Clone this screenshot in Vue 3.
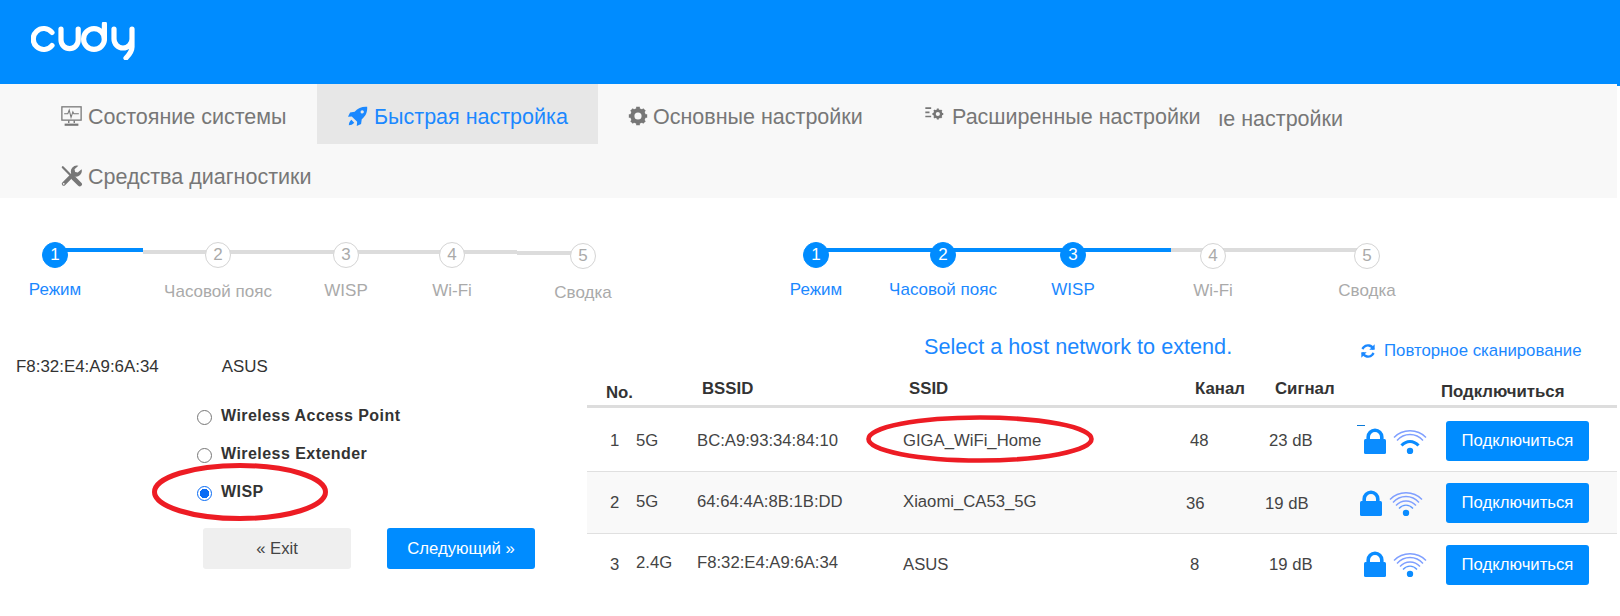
<script setup>
const tabsRow = [
  { label: 'Состояние системы', icon: 'monitor', cls: 't1' },
  { label: 'Быстрая настройка', icon: 'rocket', cls: 't2 active' },
  { label: 'Основные настройки', icon: 'gear', cls: 't3' },
  { label: 'Расширенные настройки', icon: 'adv', cls: 't4' }
]
const names = ['Режим', 'Часовой пояс', 'WISP', 'Wi-Fi', 'Сводка']
const leftSteps = [
  { g: 0, dy: 0, ly: 0, on: true }, { g: 163, dy: 0, ly: 2 }, { g: 128, dy: 0, ly: 1 }, { g: 106, dy: 0, ly: 1 }, { g: 131, dy: 1, ly: 2 }
]
const rightSteps = [
  { g: 0, dy: 0, ly: 0, on: true }, { g: 127, dy: 0, ly: 0, on: true }, { g: 130, dy: 0, ly: 0, on: true }, { g: 140, dy: 1, ly: 0 }, { g: 154, dy: 1, ly: 0 }
]
const stepOf = (list) => list.map((s, i) => ({ ...s, n: i + 1, name: names[i] }))
const left = stepOf(leftSteps)
const right = stepOf(rightSteps)
const rows = [
  { n: 1, band: '5G', mac: 'BC:A9:93:34:84:10', ssid: 'GIGA_WiFi_Home', ch: '48', sig: '23 dB', dx: 0, iy: -1, strong: true, y: [0, 0, 0, 0, 0, 0], cls: 'first' },
  { n: 2, band: '5G', mac: '64:64:4A:8B:1B:DD', ssid: 'Xiaomi_CA53_5G', ch: '36', sig: '19 dB', dx: -4, iy: -1, strong: false, y: [-1, -3, -3, -3, 2, 2], cls: 'alt' },
  { n: 3, band: '2.4G', mac: 'F8:32:E4:A9:6A:34', ssid: 'ASUS', ch: '8', sig: '19 dB', dx: 0, iy: -2, strong: false, y: [0, -4, -4, 0, 0, 0], cls: 'last' }
]
</script>

<template>
  <div class="page">
    <header class="top">
      <svg class="logo" viewBox="0 0 104 38" fill="none" stroke="#fff" stroke-width="5.2" stroke-linecap="round" stroke-linejoin="round">
        <path d="M21 10.5 A10.5 10.5 0 1 0 21 23.5" />
        <path d="M30 7 V18 A8.6 8.6 0 0 0 47.2 18 V7" />
        <circle cx="63" cy="17" r="10.4" />
        <path d="M73.4 2 V17" />
        <path d="M83 7 V17 A9 9 0 0 0 101 17 V7 V25 C101 30 98 33 95 36" />
      </svg>
    </header>
    <span class="stripe"></span>

    <nav class="nav">
      <a v-for="t in tabsRow" :key="t.label" class="tab" :class="t.cls">
        <svg v-if="t.icon === 'monitor'" class="ic" viewBox="0 0 24 24" fill="none" stroke="currentColor">
          <rect x="1.5" y="2" width="21" height="14.5" stroke-width="1.4" />
          <path d="M4 9.5h4l1.5-4 2 8 2-6 1 2h5.5" stroke-width="1.1" />
          <path d="M9 17v2.5M15 17v2.5" stroke-width="1.5" />
          <path d="M4.5 21.5h15" stroke-width="2.4" />
        </svg>
        <svg v-else-if="t.icon === 'rocket'" class="ic" viewBox="0 0 24 24" fill="currentColor">
          <path d="M23 1c.5 6-1.500 11-6.500 15l-.8 5.500L10.500 24l.5-5-6.500-6.500-4.500.5 2.500-5.200L8 7C12 2.500 17 .500 23 1zM17 5a2 2 0 1 0 .1 4 2 2 0 0 0-.1-4zM4 16.500l3.500 3.500C6 22 3 23 1 23c0-2 1-5 3-6.500z" />
        </svg>
        <svg v-else-if="t.icon === 'gear'" class="ic" viewBox="0 0 24 24" fill="none" stroke="currentColor">
          <circle cx="12" cy="12" r="6.800" stroke-width="5" />
          <path d="M12 1v22M1 12h22M4.200 4.200l15.600 15.600M19.800 4.200 4.200 19.800" stroke-width="4.400" stroke-dasharray="4 14" />
        </svg>
        <svg v-else class="ic adv" viewBox="0 0 24 24" fill="none" stroke="currentColor">
          <path d="M1 5h7M1 10h5M1 15h7" stroke-width="2" />
          <circle cx="16" cy="12" r="4" stroke-width="3" />
          <path d="M16 5.500v13M9.500 12h13M11.400 7.400l9.200 9.200M20.600 7.400l-9.200 9.200" stroke-width="2.400" stroke-dasharray="2.400 8.200" />
        </svg>
        <span>{{ t.label }}</span>
      </a>
      <span class="ghost">ые настройки</span>
      <a class="tab t5">
        <svg class="ic" viewBox="0 0 24 24" fill="none" stroke="currentColor" stroke-linecap="round">
          <path d="M2.500 2.500 13 13" stroke-width="2.400" />
          <path d="M14 14l7 7" stroke-width="4.800" />
          <path d="M3.500 20.500 14 10" stroke-width="4.200" />
          <path d="M23 4.500 18.800 8.200 16 7.500 15.300 4.700 19.500 .8A6.500 6.500 0 0 0 11.800 9.500L14.800 12.500A6.500 6.500 0 0 0 23 4.500z" fill="currentColor" stroke="none" />
          <circle cx="3.500" cy="20.500" r="1" fill="#f8f8f8" stroke="none" />
        </svg>
        <span>Средства диагностики</span>
      </a>
    </nav>

    <main class="main">
      <section class="left">
        <div class="stepper s-left">
          <span class="line grey"></span><span class="line grey2"></span><span class="line blue"></span>
          <div v-for="s in left" :key="s.n" class="step" :class="{ on: s.on }" :style="{ marginLeft: s.g + 'px', marginTop: s.dy + 'px' }">
            <span class="dot">{{ s.n }}</span>
            <span class="lbl" :style="{ marginTop: 12 + s.ly + 'px' }">{{ s.name }}</span>
          </div>
        </div>
        <div class="host"><span>F8:32:E4:A9:6A:34</span><span>ASUS</span></div>
        <div class="radios">
          <label class="radio"><i></i>Wireless Access Point</label>
          <label class="radio"><i></i>Wireless Extender</label>
          <label class="radio sel"><i></i>WISP</label>
        </div>
        <div class="actions">
          <button class="btn ghostbtn">« Exit</button>
          <button class="btn">Следующий »</button>
        </div>
      </section>

      <section class="right">
        <div class="stepper s-right">
          <span class="line grey"></span><span class="line blue"></span>
          <div v-for="s in right" :key="s.n" class="step" :class="{ on: s.on }" :style="{ marginLeft: s.g + 'px', marginTop: s.dy + 'px' }">
            <span class="dot">{{ s.n }}</span>
            <span class="lbl" :style="{ marginTop: 12 + s.ly + 'px' }">{{ s.name }}</span>
          </div>
        </div>
        <div class="titlebar">
          <h2>Select a host network to extend.</h2>
          <a class="rescan">
            <svg viewBox="0 0 24 24" fill="none" stroke="currentColor" stroke-width="3.600">
              <path d="M20 9.500A8.500 8.500 0 0 0 5.500 6.500L3.500 9" />
              <path d="M4 14.500A8.500 8.500 0 0 0 18.500 17.500l2-2.500" />
              <path d="M22 2v8h-8zM2 22v-8h8z" fill="currentColor" stroke="none" />
            </svg>
            Повторное сканирование
          </a>
        </div>

        <div class="thead">
          <b class="no">No.</b><b>BSSID</b><b>SSID</b><b>Канал</b><b>Сигнал</b><b class="conn">Подключиться</b>
        </div>
        <div v-for="r in rows" :key="r.n" class="row" :class="r.cls">
          <span :style="{ marginTop: r.y[0] + 'px' }">{{ r.n }}</span>
          <span :style="{ marginTop: r.y[1] + 'px' }">{{ r.band }}</span>
          <span :style="{ marginTop: r.y[2] + 'px' }">{{ r.mac }}</span>
          <span :style="{ marginTop: r.y[3] + 'px' }">{{ r.ssid }}</span>
          <span :style="{ marginTop: r.y[4] + 'px', marginLeft: r.dx + 'px' }">{{ r.ch }}</span>
          <span :style="{ marginTop: r.y[5] + 'px', marginLeft: r.dx + 'px' }">{{ r.sig }}</span>
          <span class="icons" :style="{ marginLeft: r.dx + 'px', marginTop: r.iy + 'px' }">
            <em v-if="r.strong" class="tick"></em>
            <svg class="lock" viewBox="0 0 22 26">
              <path d="M4.200 12V9a6.800 6.800 0 0 1 13.600 0V12" fill="none" stroke="#0a8cff" stroke-width="3.600" />
              <rect x="0" y="11" width="22" height="15" rx="1.500" fill="#0a8cff" />
            </svg>
            <svg class="wifi" viewBox="0 0 34 26" fill="none">
              <path d="M1 9.500C9.500 .5 24.500 .5 33 9.500" stroke="#7f9fff" stroke-width="1.400" />
              <path d="M4 12.500C11 4.500 23 4.500 30 12.500" stroke="#7f9fff" stroke-width="1.400" />
              <path v-if="!r.strong" d="M7 15.500c5.500-6 14.500-6 20 0" stroke="#7f9fff" stroke-width="1.400" />
              <path v-if="!r.strong" d="M10 18.500c4-4.500 10-4.500 14 0" stroke="#5f9aff" stroke-width="1.400" />
              <path v-else d="M8.500 17.500c5-5.500 12-5.500 17 0" stroke="#0a8cff" stroke-width="3" />
              <circle cx="17" cy="23" r="3.200" fill="#0a8cff" />
            </svg>
          </span>
          <button class="btn small">Подключиться</button>
        </div>
      </section>
    </main>

    <svg class="ring r1" viewBox="0 0 176 58" fill="none"><ellipse cx="88" cy="29" rx="85.500" ry="26.500" stroke="#ed1c24" stroke-width="5" /></svg>
    <svg class="ring r2" viewBox="0 0 228 48" fill="none"><ellipse cx="114" cy="24" rx="111.500" ry="21.500" stroke="#ed1c24" stroke-width="4.600" /></svg>
  </div>
</template>

<style>
html, body { margin: 0; background: #fff; }
</style>

<style scoped>
.page { position: relative; width: 1620px; height: 616px; overflow: hidden; font-family: "Liberation Sans", Arial, sans-serif; color: #333; }
.top { height: 84px; background: #008cff; }
.logo { display: block; width: 104px; height: 38px; margin-left: 31px; padding-top: 22px; }
.stripe { position: absolute; left: 1218px; right: 0; top: 84px; height: 2px; background: #008cff; }

.nav { position: relative; width: 1617px; height: 114px; background: #f8f8f8; display: flex; flex-wrap: wrap; align-content: flex-start; font-size: 21.500px; color: #777; }
.tab { display: flex; align-items: center; height: 60px; color: #777; box-sizing: border-box; }
.tab span { white-space: nowrap; padding-top: 7px; }
.ic { width: 23px; height: 22px; margin-right: 5px; margin-top: 3px; flex: none; }
.adv { width: 21px; height: 20px; margin-top: -1px; }
.t1 { padding-left: 60px; width: 317px; }
.t2 { width: 281px; padding-left: 31px; color: #1b88ff; background: #e7e7e7; }
.t2 .ic { width: 20px; margin-right: 6px; }
.t3 { padding-left: 30px; width: 297px; }
.t3 .ic { width: 20px; margin-right: 5px; }
.t4 { width: 722px; padding-left: 29px; }
.t4 .ic { margin-right: 7px; }
.t5 { padding-left: 60px; width: 400px; }
.ghost { position: absolute; left: 1219px; top: 23px; line-height: 24px; color: #777; white-space: nowrap; width: 124px; overflow: hidden; direction: rtl; }

.main { display: flex; }
.left { width: 587px; flex: none; }
.right { flex: 1; min-width: 0; }

.stepper { position: relative; display: flex; height: 76px; padding-top: 44px; font-size: 17px; }
.s-left { padding-left: 55px; }
.s-right { padding-left: 229px; }
.step { width: 0; display: flex; flex-direction: column; align-items: center; position: relative; z-index: 1; }
.dot { flex: none; box-sizing: border-box; width: 26px; height: 26px; border-radius: 50%; border: 1.500px solid #d4d4d4; background: #fff; color: #aaa; font-size: 17px; line-height: 23px; text-align: center; }
.lbl { white-space: nowrap; color: #aaa; line-height: 20px; }
.step.on .dot { background: #008cff; border-color: #008cff; color: #fff; }
.step.on .lbl { color: #1b88ff; }
.line { position: absolute; height: 4px; }
.grey { background: #dcdcdc; }
.grey2 { background: #dcdcdc; }
.blue { background: #008cff; }
.s-left .grey { left: 143px; width: 374px; top: 52px; }
.s-left .grey2 { left: 517px; width: 66px; top: 53px; }
.s-left .blue { left: 55px; width: 88px; top: 50px; }
.s-right .grey { left: 229px; width: 551px; top: 50px; }
.s-right .blue { left: 229px; width: 355px; top: 50px; }

.host { display: flex; gap: 63px; padding-left: 16px; margin-top: 39px; font-size: 16.900px; line-height: 20px; color: #333; }
.radios { margin-top: 29px; padding-left: 197px; display: flex; flex-direction: column; gap: 18px; }
.radio { display: flex; align-items: center; height: 20px; font-weight: 700; font-size: 16px; letter-spacing: .45px; color: #333; }
.radio i { box-sizing: border-box; width: 15px; height: 15px; border-radius: 50%; border: 1px solid #777; margin-right: 9px; margin-top: 2px; background: #fff; }
.radio.sel i { border: 1px solid #0a6cf5; background: radial-gradient(circle, #0a6cf5 0 4.500px, #fff 5px); }
.actions { display: flex; gap: 36px; padding-left: 203px; margin-top: 26px; }
.btn { box-sizing: border-box; width: 148px; height: 41px; border: 0; border-radius: 3px; background: #008cff; color: #fff; font: 16.700px "Liberation Sans", Arial, sans-serif; padding: 0; }
.ghostbtn { background: #efefef; color: #444; }

.titlebar { position: relative; display: flex; height: 38px; margin-top: 20px; }
.titlebar h2 { margin: -6px 0 0; padding-left: 337px; font-weight: 400; font-size: 21.660px; line-height: 30px; color: #1b88ff; white-space: nowrap; }
.rescan { position: absolute; left: 773px; top: 3px; display: flex; align-items: center; gap: 8px; font-size: 16.800px; color: #1b88ff; white-space: nowrap; line-height: 20px; }
.rescan svg { width: 16px; height: 16px; }

.thead { display: grid; align-items: center; grid-template-columns: 96px 207px 286px 80px 166px auto; height: 27px; padding-top: 2px; border-bottom: 3px solid #ddd; font-size: 16.800px; color: #333; padding-left: 19px; width: 1011px; }
.thead b { margin-top: -6px; white-space: nowrap; }
.thead .no { margin-top: 2px; }
.thead .conn { margin-top: 0; }
.row { display: grid; grid-template-columns: 26px 61px 206px 287px 79px 95px 82px 143px; align-items: center; padding-left: 23px; box-sizing: border-box; height: 62px; border-bottom: 1px solid #e0e0e0; font-size: 16.700px; color: #444; width: 1030px; }
.row.first { height: 64px; padding-top: 3px; }
.row.alt { background: #f9f9f9; padding-top: 1px; }
.row.last { border-bottom: 0; }
.row span { white-space: nowrap; }
.icons { position: relative; display: flex; align-items: center; gap: 7px; }
.tick { position: absolute; left: -7px; top: -3px; width: 8px; height: 1px; background: #0a7ad8; }
.lock { width: 22px; height: 26px; }
.wifi { width: 34px; height: 26px; }
.small { width: 143px; height: 40px; }

.ring { position: absolute; display: block; }
.r1 { left: 152px; top: 463px; width: 176px; height: 58px; }
.r2 { left: 866px; top: 415px; width: 228px; height: 48px; }
</style>
